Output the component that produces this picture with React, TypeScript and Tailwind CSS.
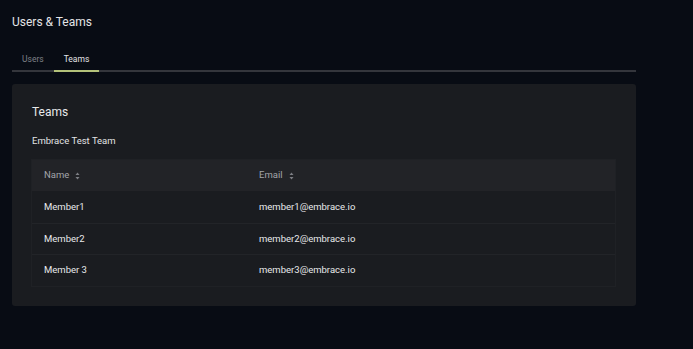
import React from "react";

const members = [
  { name: "Member1", email: "member1@embrace.io" },
  { name: "Member2", email: "member2@embrace.io" },
  { name: "Member 3", email: "member3@embrace.io" },
];

function SortIcon() {
  return (
    <svg width="5" height="8" viewBox="0 0 5 8" className="text-[#7d7f85]">
      <path d="M2.5 0.5 L4.5 3 H0.5 Z" fill="currentColor" />
      <path d="M2.5 7.5 L4.5 5 H0.5 Z" fill="currentColor" />
    </svg>
  );
}

export default function App() {
  return (
    <div className="min-h-screen bg-[#080c14] font-['Roboto',sans-serif] text-[#e6e7e9]">
      <div className="w-[624px] ml-3 pt-[14px]">
        <h1 className="text-[12px] leading-4 text-[#e4e5e7]">Users &amp; Teams</h1>

        {/* tabs */}
        <div className="mt-[23px] flex border-b-2 border-[#34363c]">
          <div className="px-[10px] pb-[5px] text-[8.5px] leading-3 text-[#7f8187]">Users</div>
          <div className="px-[10px] pb-[5px] text-[8.5px] leading-3 text-[#e4e5e7] border-b-2 border-[#b3c27a] -mb-[2px]">
            Teams
          </div>
        </div>

        {/* card */}
        <div className="mt-3 rounded-[3px] bg-[#1a1c20] p-5 pb-[19px]">
          <h2 className="text-[12px] leading-4 text-[#e8e9eb]">Teams</h2>
          <div className="mt-[14px] text-[9.5px] leading-[14px] text-[#e2e3e5]">Embrace Test Team</div>

          <div className="mt-[11px] -ml-px border border-[#1f2125] text-[9.5px]">
            <div className="grid grid-cols-[215px_1fr] h-[31px] bg-[#222327] items-center text-[#a3a5aa]">
              <div className="px-[12px] flex items-center gap-[6px]">
                Name <SortIcon />
              </div>
              <div className="px-[12px] flex items-center gap-[6px]">
                Email <SortIcon />
              </div>
            </div>
            {members.map((m, i) => (
              <div
                key={m.email}
                className={
                  "grid grid-cols-[215px_1fr] h-[31.5px] items-center text-[#e8e9eb] " +
                  (i > 0 ? "border-t border-[#222428]" : "")
                }
              >
                <div className="px-[12px]">{m.name}</div>
                <div className="px-[12px]">{m.email}</div>
              </div>
            ))}
          </div>
        </div>
      </div>
    </div>
  );
}
